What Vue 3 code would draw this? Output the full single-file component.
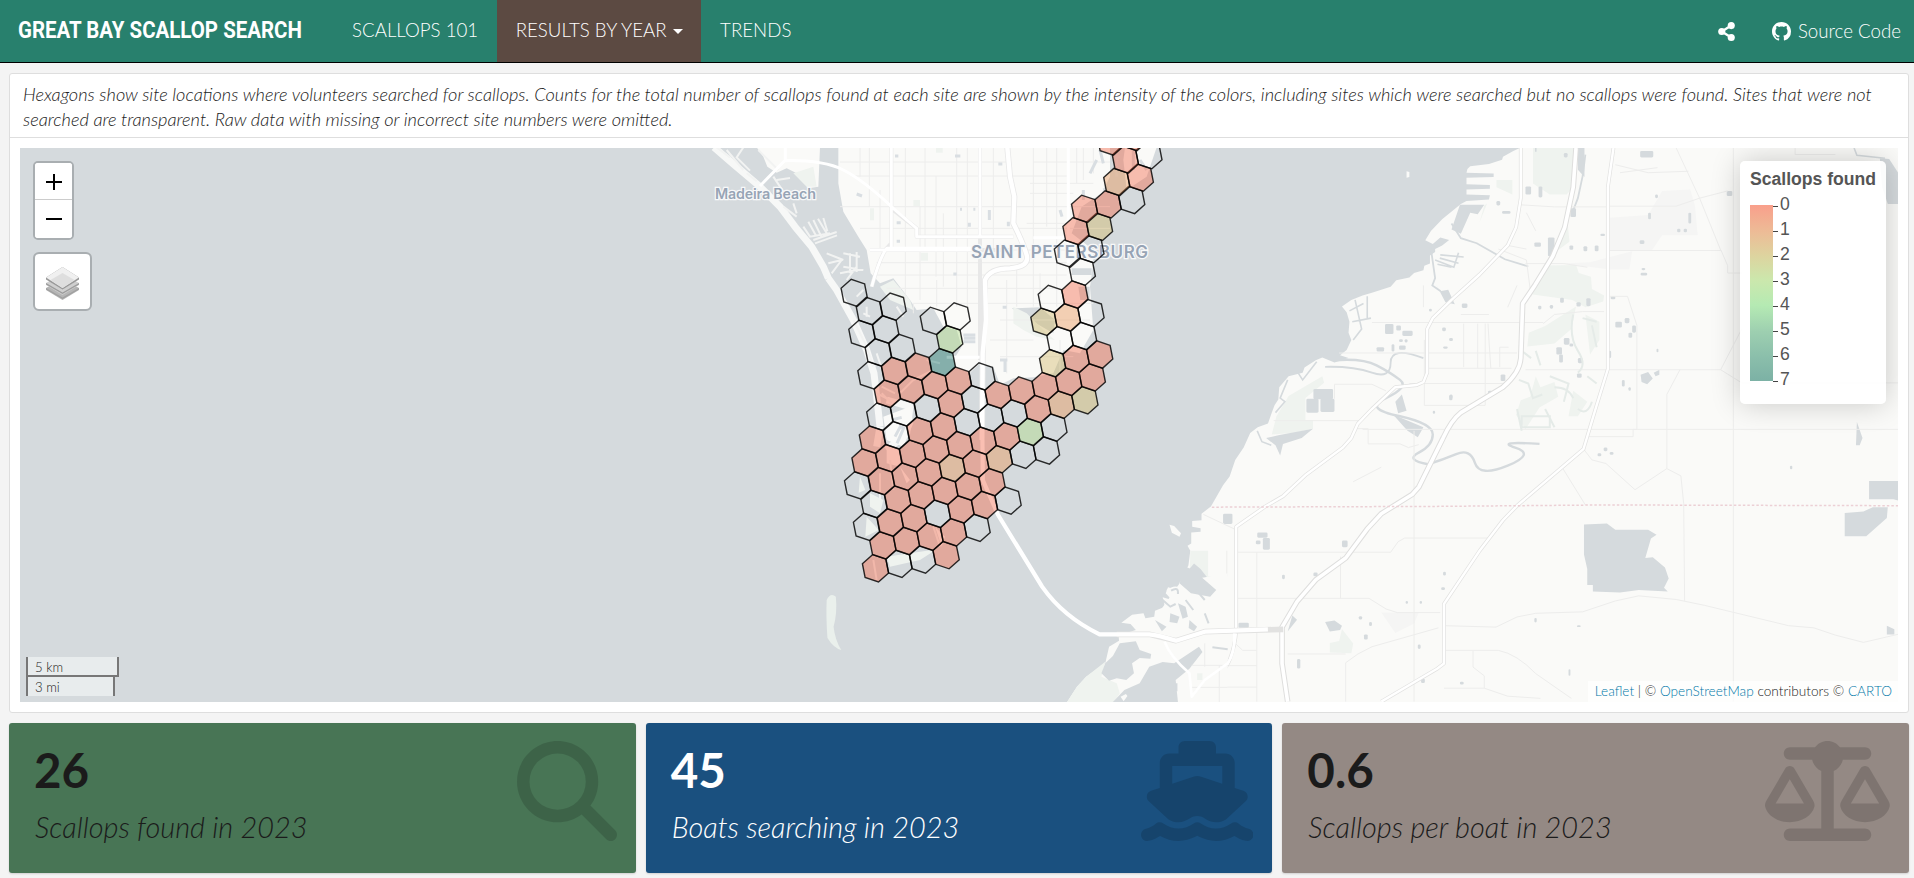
<script setup>
// Site grid: each row holds the starting column and one code per column.
// 0 none found, 1-7 counts, e searched area outline only, . no site
const rows = [
  [0, 0, '0ee0'],
  [1, 0, '0000e'],
  [2, -1, 'e00e00e'],
  [3, -1, 'e00000'],
  [4, -2, 'e00010' + '1ee'],
  [5, -2, '00000003e'],
  [6, -2, '0e00eee012'],
  [7, -2, 'eee0e00000'],
  [8, -2, '0000e..200'],
  [9, -3, 'e007....ee'],
  [10, -3, 'ee.3...21e'],
  [11, -4, 'ee.ee...e0'],
  [12, -4, 'ee.......e'],
  [13, -5, 'e........ee'],
  [14, 4, '02'],
  [15, 4, '00e'],
  [16, 5, '10'],
  [17, 5, '0e'],
  [18, 4, '00'],
]
const fills = { 0: '#f35f3f', 1: '#e88f4b', 2: '#d0b45f', 3: '#aad980', 7: '#0c6e62', e: 'none' }
const corners = [[10.4, -9.1], [-3, -13.6], [-13.1, -4.6], [-10.4, 9.1], [3, 13.6], [13.1, 4.6]]

const hexes = []
for (const [j, start, codes] of rows) {
  ;[...codes].forEach((code, n) => {
    if (code === '.') return
    const i = start + n
    const drift = Math.max(0, j - 12) * 1.2
    const cx = 875.5 + (i < 0 ? 23.8 : 23.55) * i + 7.42 * j + drift
    const cy = 568.3 - 4.37 * i - 22.9 * j + drift * 0.4
    hexes.push({
      id: `${i}:${j}`,
      fill: fills[code],
      points: corners.map(([x, y]) => `${(cx + x).toFixed(1)},${(cy + y).toFixed(1)}`).join(' '),
    })
  })
}

// Ponds and small lakes scattered over the eastern shore
const ponds = [
  [438, 506, 18, 28], [462, 510, 10, 14], [475, 525, 22, 14], [468, 548, 8, 8], [480, 548, 6, 9], [468, 565, 14, 12],
  [420, 570, 16, 12], [452, 562, 6, 20], [270, 712, 26, 38], [300, 712, 30, 36], [285, 685, 42, 28], [92, 1028, 20, 28],
  [165, 1080, 22, 14], [177, 1095, 15, 32], [162, 1102, 10, 10], [346, 1102, 12, 18], [285, 1190, 9, 10], [382, 1310, 7, 9],
  [404, 1326, 6, 11], [125, 1328, 22, 14], [393, 1360, 8, 14], [508, 1388, 6, 12], [250, 1428, 7, 26], [60, 1425, 14, 16],
  [515, 1482, 8, 12], [598, 1490, 8, 8], [757, 1315, 5, 12], [848, 1335, 8, 5], [218, 1196, 6, 12], [482, 1268, 5, 8],
  [512, 1268, 5, 8], [562, 1188, 6, 10], [558, 1230, 8, 8], [1303, 896, 5, 10], [983, 30, 28, 18], [738, 128, 12, 22],
  [766, 128, 8, 30], [676, 168, 8, 12], [688, 195, 18, 8], [757, 282, 14, 12], [786, 268, 14, 52], [834, 188, 12, 24],
  [986, 352, 8, 6], [984, 365, 14, 8], [560, 516, 8, 10], [575, 545, 8, 8], [562, 568, 10, 6], [602, 450, 12, 12],
  [532, 464, 6, 8], [685, 645, 10, 18], [658, 690, 9, 14], [575, 702, 7, 14], [765, 456, 7, 10], [790, 454, 7, 10],
  [812, 434, 8, 14], [847, 446, 9, 12], [868, 435, 9, 22], [920, 430, 10, 8], [982, 276, 10, 10], [1015, 150, 6, 10],
  [1168, 140, 12, 14], [1062, 244, 7, 10], [1076, 244, 7, 10], [862, 292, 8, 14], [886, 290, 8, 16], [832, 290, 8, 12],
  [850, 600, 10, 14], [848, 642, 10, 12], [944, 660, 6, 18], [958, 680, 5, 10], [916, 580, 5, 20], [1018, 574, 4, 10],
  [930, 500, 14, 16], [950, 490, 10, 14], [966, 510, 8, 20], [958, 530, 8, 14], [905, 846, 8, 10], [892, 862, 8, 8],
  [918, 858, 8, 8], [804, 570, 12, 20], [820, 545, 12, 18], [810, 590, 8, 22], [832, 560, 8, 8], [820, 36, 8, 12],
  [1086, 200, 6, 30], [1000, 200, 6, 18], [898, 258, 10, 6], [576, 700, 6, 12], [540, 745, 5, 8], [830, 1456, 4, 18],
]
const labels = [0, 1, 2, 3, 4, 5, 6, 7]
const boxes = [
  {
    value: '26', text: 'Scallops found in 2023', tone: 'green', w: 100, vb: '0 0 512 512',
    d: 'M416 208c0 45.9-14.9 88.3-40 122.7L502.6 457.4c12.5 12.5 12.5 32.8 0 45.3s-32.8 12.5-45.3 0L330.7 376c-34.4 25.2-76.8 40-122.7 40C93.1 416 0 322.9 0 208S93.1 0 208 0S416 93.1 416 208zM208 352a144 144 0 1 0 0-288 144 144 0 1 0 0 288z',
  },
  {
    value: '45', text: 'Boats searching in 2023', tone: 'blue', w: 112.5, vb: '0 0 576 512',
    d: 'M192 32c0-17.7 14.3-32 32-32H352c17.7 0 32 14.3 32 32V64h48c26.5 0 48 21.5 48 48V240l44.4 14.8c23.1 7.7 29.5 37.5 11.5 53.9l-101 92.6c-16.2 9.4-34.7 15.1-50.9 15.1c-19.6 0-40.8-7.7-59.2-20.3c-22.1-15.5-51.6-15.5-73.7 0c-17.1 11.8-38 20.3-59.2 20.3c-16.2 0-34.7-5.7-50.9-15.1l-101-92.6c-18-16.5-11.6-46.2 11.5-53.9L96 240V112c0-26.5 21.5-48 48-48h48V32zM160 218.7l107.8-35.9c13.1-4.4 27.3-4.4 40.5 0L416 218.7V128H160v90.7zM306.5 421.9C329 437.4 356.5 448 384 448c26.9 0 55.4-10.8 77.4-26.1l0 0c11.9-8.5 28.1-7.8 39.2 1.7c14.4 11.9 32.5 21 50.6 25.2c17.2 4 27.9 21.2 23.9 38.4s-21.2 27.9-38.4 23.9c-24.5-5.7-44.9-16.5-58.2-25C449.5 501.7 417 512 384 512c-31.9 0-60.6-9.9-80.4-18.9c-5.8-2.7-11.1-5.3-15.6-7.7c-4.5 2.4-9.7 5.1-15.6 7.7c-19.8 9-48.5 18.9-80.4 18.9c-33 0-65.5-10.3-94.5-25.8c-13.4 8.4-33.7 19.3-58.2 25c-17.2 4-34.4-6.7-38.4-23.9s6.7-34.4 23.9-38.4c18.1-4.2 36.2-13.3 50.6-25.2c11.1-9.4 27.3-10.1 39.2-1.7l0 0C136.7 437.2 165.1 448 192 448c27.5 0 55-10.6 77.5-26.1c11.1-7.9 25.9-7.9 37 0z',
  },
  {
    value: '0.6', text: 'Scallops per boat in 2023', tone: 'taupe', w: 125, vb: '0 0 640 512',
    d: 'M384 32H512c17.7 0 32 14.3 32 32s-14.3 32-32 32H398.4c-5.2 25.8-22.9 47.1-46.4 57.3V448H512c17.7 0 32 14.3 32 32s-14.3 32-32 32H320 128c-17.7 0-32-14.3-32-32s14.3-32 32-32H288V153.3c-23.5-10.3-41.2-31.6-46.4-57.3H128c-17.7 0-32-14.3-32-32s14.3-32 32-32H256c14.6-19.4 37.8-32 64-32s49.4 12.6 64 32zm55.6 288H584.4L512 195.8 439.6 320zM512 416c-62.9 0-115.2-34-126-78.9c-2.6-11 1-22.3 6.7-32.1l95.2-163.2c5-8.6 14.2-13.8 24.1-13.8s19.1 5.3 24.1 13.8l95.2 163.2c5.7 9.8 9.3 21.1 6.7 32.1C627.2 382 574.9 416 512 416zM126.8 195.8L54.4 320H199.3L126.8 195.8zM.9 337.1c-2.6-11 1-22.3 6.7-32.1l95.2-163.2c5-8.6 14.2-13.8 24.1-13.8s19.1 5.3 24.1 13.8l95.2 163.2c5.7 9.8 9.3 21.1 6.7 32.1C242 382 189.7 416 126.8 416S11.7 382 .9 337.1z',
  },
]
</script>

<template>
  <div class="page">
    <nav class="navbar">
      <div class="brand"><span>GREAT BAY SCALLOP SEARCH</span></div>
      <a class="tab">SCALLOPS 101</a>
      <a class="tab active">RESULTS BY YEAR<i class="caret"></i></a>
      <a class="tab">TRENDS</a>
      <div class="right">
        <svg class="share" viewBox="0 0 448 512"><circle cx="352" cy="96" r="96" /><circle cx="96" cy="256" r="96" /><circle cx="352" cy="416" r="96" /><path d="M352 96L96 256l256 160" fill="none" stroke="#fff" stroke-width="64" /></svg>
        <svg class="github" viewBox="0 0 16 16"><path d="M8 0C3.58 0 0 3.58 0 8c0 3.54 2.29 6.53 5.47 7.59.4.07.55-.17.55-.38 0-.19-.01-.82-.01-1.49-2.01.37-2.53-.49-2.69-.94-.09-.23-.48-.94-.82-1.13-.28-.15-.68-.52-.01-.53.63-.01 1.08.58 1.23.82.72 1.21 1.87.87 2.33.66.07-.52.28-.87.51-1.07-1.78-.2-3.64-.89-3.64-3.95 0-.87.31-1.59.82-2.15-.08-.2-.36-1.02.08-2.12 0 0 .67-.21 2.2.82.64-.18 1.32-.27 2-.27s1.36.09 2 .27c1.53-1.04 2.2-.82 2.2-.82.44 1.1.16 1.92.08 2.12.51.56.82 1.27.82 2.15 0 3.07-1.87 3.75-3.65 3.95.29.25.54.73.54 1.48 0 1.07-.01 1.93-.01 2.2 0 .21.15.46.55.38A8.01 8.01 0 0 0 16 8c0-4.42-3.58-8-8-8z" /></svg>
        <span class="source">Source Code</span>
      </div>
    </nav>

    <main class="dash">
      <section class="card">
        <p class="note">Hexagons show site locations where volunteers searched for scallops. Counts for the total number of scallops found at each site are shown by the intensity of the colors, including sites which were searched but no scallops were found. Sites that were not<br />searched are transparent. Raw data with missing or incorrect site numbers were omitted.</p>
        <div class="map">
          <svg class="tiles" viewBox="20 148 1878 554">
            <!-- eastern shore -->
            <g transform="translate(1180 140) scale(.46811 .36352)">
              <path class="land" d="M726 22L712 30 690 46 688 54 660 66 620 72 614 80 612 90 670 92 670 102 612 104 612 122 662 124 662 134 612 136 612 150 662 152 660 164 612 168 600 176 560 218 536 250 524 276 540 286 556 268 575 275 560 290 545 300 545 308 534 318 534 340 522 346 520 358 500 366 490 378 462 386 450 404 430 412 410 420 390 428 366 440 346 458 356 474 362 500 360 530 366 550 356 578 342 592 360 600 330 612 304 598 290 606 266 626 262 640 232 650 212 680 210 714 202 730 196 750 188 780 166 790 150 806 136 846 118 880 106 926 92 950 66 1008 46 1028 46 1046 26 1048 26 1064 44 1068 44 1078 24 1080 24 1110 16 1116 22 1130 18 1170 0 1218 -100 1400 -40 1580H1540V22Z" />
              <path class="park" d="M754 22H850V60L840 130 826 150H790L754 120ZM826 200L832 280 800 310ZM778 345L846 344 852 366 878 376 880 410 906 428 904 444 866 460 838 440 750 424ZM846 458L836 520 800 560 742 568 745 530 780 512ZM304 650L308 668 268 710 268 770H284L284 794 240 806 196 810 206 760 232 704ZM22 1130H60V1200L86 1206 80 1250 20 1240ZM346 1345L370 1385 366 1412 320 1410V1384L340 1378ZM656 175L640 226 650 180ZM676 110H710V150L676 130ZM760 650l10 30 30-14 8 40-40 30-30 60-20-40 10-40 20-10zM840 690l30 30-20 40-20 0zM866 480l30 20v50l-20 40z" />
              <path class="urban" d="M918 214L1000 206 1030 140 1090 136 1100 180 1106 262 1030 262 1008 304 918 304ZM816 340l60-4 90-30-6 50-40 0zM430 1300h80l-10 30-40 26z" />
              <path class="water" d="M863 1058L912 1055 930 1072 1000 1072 1018 1086 1006 1096 994 1150 1010 1148 1036 1176 1044 1206 1034 1232 1042 1242 980 1238 940 1245 882 1242 882 1224 870 1224 870 1180 863 1140ZM1472 938H1540V994L1524 988H1472ZM1420 1026L1460 1022 1480 1010H1512L1510 1040 1466 1090H1420ZM1446 776L1458 820 1452 840H1444ZM984 646L1000 638 1010 656 998 672 986 666ZM1012 640l12-8v14l-8 4zM598 178L650 178 636 204 620 200 600 258 580 246ZM850 22h14v80l-14-20zM1495 50L1515 52 1534 90V176H1512L1500 130ZM310 1326L330 1322 346 1336 342 1348 320 1352ZM240 1308L250 1320 230 1352ZM30 1165L44 1180 84 1246 60 1256 10 1236 0 1210ZM284 794L260 820 220 836 214 868 204 840 184 820 210 812ZM474 700L484 745 466 752 460 720ZM455 755L520 790 508 818 486 800ZM545 392l10 24 18-4 14 40-20-6zM1510 1336l16 10v14h-16zM0 1390L46 1400 30 1430 0 1450Z" />
              <path class="creek" d="M330 606Q390 600 420 620T470 660T440 710T470 760Q540 780 540 810T510 860T530 892Q560 880 590 864T630 888T700 896T716 846T768 836" stroke-width="2.4" />
              <path class="creek" d="M310 624Q370 622 410 640T450 612 520 600M535 290l10 90-6 20 18 16M580 230l20 40 34 14 60 44 50 20M866 40l-6 60-10 60-12 40" stroke-width="1.8" />
              <path class="creek" d="M362 470l30-20M368 500l40 -10M374 440l14 80-18 30M400 430v60M230 660l-16 50 10 10-20 30M252 640l10 20 30-50M165 800l10 30 20 10M1440 22l6 20 60 8M760 22v10M545 330l40 20 10-40M556 316l50 6M555 325l40 14M550 342l30 8" stroke-width="1.6" />
              <rect v-for="(p, n) in ponds" :key="n" class="water" :x="p[0]" :y="p[1]" :width="p[2]" :height="p[3]" rx="3" />
              <path class="minor" d="M724 178L800 184H910M918 182H1060L1110 160 1170 140M1060 22L1110 160 1156 306M918 304H1156L1170 346V366H1200M410 502H776M776 505L800 480 860 472H906M528 628H708M738 632H1155L1200 520M1155 632L1200 668H1540M522 550V730H652V505M340 586H720M606 505V625M636 505V628M658 505L660 550 664 628M683 625V570H702M490 670H690M330 672V712M330 672H410L440 690M200 772H386M376 794H402V836H470L488 846 510 838M390 796H1540M870 816H968V796H976V510L956 430H918M1068 632L1040 700V904M1040 904L972 962 910 890 880 880 862 850M1040 904L1070 924 1076 1000 1078 1268M818 904L866 1004M50 1030L116 1070M120 1134H450L466 1105 480 1095H658M120 1261H404L440 1290 464 1300H556M343 1146V1261M164 1134V1545M100 1130V1200M230 1414H354M354 1545V1438L380 1414 410 1394 552 1342M564 1336L675 1340 720 1312 760 1302 860 1298 930 1268 980 1254 1060 1264 1120 1280 1300 1336 1354 1342 1400 1362 1460 1382 1540 1358M564 1404H680Q720 1414 760 1468L836 1536M626 1405V1450L650 1474V1508H564M650 1508L700 1530 770 1536M1182 22V1545M500 800V1545M0 1446H164M0 1505H164M84 1446V1545M118 1385L134 1404H164M930 68L1000 90 1086 86M940 90L1020 76M1314 22V40H1400M738 340H820L870 350M680 300L740 330 750 430M700 460L720 400M520 400V460M600 480H660M700 290L740 300M430 900L370 940M740 200L760 250" />
              <path class="creek faint" d="M724 660l20 10 10 40 20-10M730 760h60v30h-60zM800 680q30 0 40 30M850 740q20 20 30-20M760 580l10 40M840 480q-10 60 10 100t0 60M870 650l20 20M790 650l40 20-10 50M720 740l10 60M780 740l20 50M730 580l20 20M880 510l10 60M860 490l30 10" stroke-width="2" />
              <path class="case" stroke-width="3.8" d="M728 22V160L718 240 700 290 640 370 580 440 540 490 528 520V640L520 666 506 674 460 680 410 740 380 780 366 820 348 846 270 920 220 980 180 1010 120 1064V1350Q118 1390 106 1430T60 1480L24 1540M926 22L914 130V630L890 730 862 850 720 1006 690 1046 640 1130 564 1276V1440L550 1454 430 1545" />
              <path class="case dark" stroke-width="5.6" d="M846 22L840 130 822 240 796 320 758 400 732 450 728 600Q726 640 690 680L600 750Q580 770 562 820L510 955 496 975 430 1028 400 1070 354 1150 290 1210 250 1270 218 1340V1440L230 1545" />
              <path class="road" stroke-width="2.4" d="M728 22V160L718 240 700 290 640 370 580 440 540 490 528 520V640L520 666 506 674 460 680 410 740 380 780 366 820 348 846 270 920 220 980 180 1010 120 1064V1350Q118 1390 106 1430T60 1480L24 1540M926 22L914 130V630L890 730 862 850 720 1006 690 1046 640 1130 564 1276V1440L550 1454 430 1545" />
              <path class="road" stroke-width="3.6" d="M846 22L840 130 822 240 796 320 758 400 732 450 728 600Q726 640 690 680L600 750Q580 770 562 820L510 955 496 975 430 1028 400 1070 354 1150 290 1210 250 1270 218 1340V1440L230 1545" />
              <path class="county" d="M68 1010L540 1008 900 1004 1540 1006" />
              <path class="land" d="M484 86l6 2v14l-6 2zM708 40l3 2v4l-3 0z" />
            </g>

            <!-- southern inlets -->
            <g transform="translate(780 400) scale(.38265 .33333)">
              <path class="land" d="M1045 545L1040 570 1014 562 1008 580 1024 600 1000 592 1006 620 980 632 978 650 955 655 950 640 920 644 892 668 916 672 930 690 885 706 886 722 860 740 850 790 800 830 776 860 748 910H1170V520Z" />
              <path class="park" d="M850 785L840 830 880 850 888 880 870 910H748L776 860 800 830ZM1090 820h14v20h-14z" />
              <path class="water" d="M888 730L930 724 940 750 970 762 968 776 940 774 920 790 925 820 905 840 880 835 860 842 840 820 850 790 870 768ZM1095 740L1104 756 1070 806 1034 840 1040 906H870L900 870 940 850 965 800 1000 786 1030 790ZM1040 610l20 10 6 30-14 6zM1060 500l20 10 60 60-16 20-50-10-30-30zM1020 640l24 10-6 20-20-4zM980 660l30 20-12 14zM1070 660l20 20-8 14-14-10z" />
              <path class="land" d="M1018 374L1030 378 1048 400 1044 410 1024 398ZM890 890l14-8 4 6-10 16zM1010 570q30-24 40 6l-10 20-20-6z" />
              <path class="creek" stroke-width="2" d="M1022 572q20-14 18 10M1000 600l20 20 14-8M1060 600l20 30M1110 640l10 30M1080 560l30 40M1130 742l40 6M1025 860v20M1036 850v24" />
              <path class="islet" d="M122 600Q132 576 146 590 150 640 140 680 144 720 160 750 140 744 124 714 120 650 122 600Z" />
              <path class="minor" d="M1076 796H1170M1076 862H1170M1148 796V910M1110 730V800" />
              <path class="case" stroke-width="5.6" d="M880 703H965L1035 722 1110 695 1315 688" />
              <path class="road" stroke-width="4.2" d="M528 0L530 240 570 345 685 560Q740 650 835 703H965Q990 706 1035 722L1110 695 1275 688" />
              <path class="road" stroke-width="2.6" d="M1005 725Q1020 770 1070 820L1076 890 1110 840 1170 790Q1190 760 1187 700" />
            </g>

            <!-- peninsula and barrier islands -->
            <g transform="translate(680 140) scale(.33333)">
              <path class="land" d="M230 22H420L415 140 385 145 350 100 320 85 290 98 262 80 250 50ZM475 22L475 130 490 215 535 290 560 330 572 400 600 430 640 415 690 480 710 510 760 505 790 560 830 570 845 620 820 660 828 685 870 698 900 670 940 680 960 735 1000 715 1060 712 1120 700 1150 630 1200 640 1240 570 1230 440 1240 370 1240 330 1175 280 1205 200 1265 160 1290 110 1290 22ZM1335 22H1430L1400 110 1340 150 1330 60Z" />
              <path class="water" d="M995 505L1080 502 1125 540 1120 580 1060 545ZM1195 440h34v40h-28zM1175 385h60v20h-60z" />
              <path class="park" d="M1000 500L1040 520 1100 580 1125 600 1070 590 1030 570 1000 550ZM600 440l40-20 50 60 10 30-70-30zM340 100l60-20 10 60-30 0zM700 180h20v18h-20zM722 338h22v24h-22zM570 205l12 0v36h-12zM768 22h20v16h-20z" />
              <path class="beach" d="M102 22L160 72 240 140 300 200 345 260 395 320 430 380 445 415M445 415L470 450 520 540 560 630 582 700 590 770 600 860" />
              <path class="beach" d="M600 860L590 920M620 780L690 800 680 880 620 930" />
              <path class="canal" d="M110 22l40 30M140 30l50 60M190 22l-20 30 40 40M200 100l30 24M235 30l60 60M280 110l40 60M310 200l40 30M290 120l40-6M340 190l10 30M370 260l20 30 60-10M385 245l24 44M400 240l24 50M414 236l26 44M430 234l12 40M400 300l70-24M405 310l66-24M440 340l50 20M445 370l40-10M455 400l30-40M490 340l50 10M510 340v60M530 336v60M480 400l50-10M500 420l30-40M490 380l60 10" />
              <path class="canal" d="M530 470l20-20M560 500v30M570 530l-20-10M520 540l40 80 20 60M700 720l-40 40M760 690l-60 30M740 660l40 10M620 460l30 20M650 500l20 30M605 760l30 30M590 640l20 60" />
              <path class="minor" d="M480 66H980M520 108H1160M480 200H1290M540 265H1290M570 330H1160M590 368H1160M590 405H1160M620 445H1160M700 490H1240M770 420V500M540 22V110M568 22V200M600 150V330M676 22V500M720 200V480M735 22V330M768 108V410M790 220V440M830 22V500M862 22V500M940 22V330M1060 22V500M1100 22V260M1130 22V500M1190 22V130M1210 22V120M1240 22V100M1060 66H1290M1050 160H1180M1050 130H1240M1040 250H1170M960 540H1230M930 600H1060M960 650H1180M980 420V700M1080 400V500M1140 600V700M1010 380V500M700 520V490" />
              <path class="case thin" stroke-width="4" d="M634 22V330M900 22V660M575 440Q600 350 620 325L634 310M634 205L710 265V290H1000M570 330H1000" />
              <path class="road" stroke-width="3" d="M634 22V330M900 22V290M316 22V60L240 138M316 62Q430 60 490 90T640 205L710 265V290H1000M575 440Q600 350 620 325H900M800 652H900M1165 22V370M1060 293H1170M570 330H900" />
              <path class="case thin" stroke-width="6" d="M982 22L990 110 1003 170 1000 250Q1030 310 1040 345T990 385Q930 385 915 420L908 640 906 900" />
              <path class="road" stroke-width="4.4" d="M982 22L990 110 1003 170 1000 250Q1030 310 1040 345T990 385Q930 385 915 420L918 540 908 640 906 900" />
              <path class="ponds" d="M530 162l16 6M645 48h10M825 48h16M955 72h12M650 248h12M650 304h10M868 248v12M928 210v30M985 245v14M840 208h6M880 208h6M968 502h12M820 402h10M960 660h22M975 656v40M1140 210l6 20M850 585h36M852 595h34M850 605h36M1250 60l-20 40M1260 30l10 40M1270 150l20-10M1210 150v30M1310 30v80M1300 50h20M1300 90h20M1360 30v60M1380 60l20 30" />
            </g>
            <g transform="translate(820 260) scale(.33333)">
              <path class="park" d="M120 650l16 40-20 8zM150 700l40 20-10 40-30-20zM140 770l36 40-40 20zM200 890L350 868 300 900 210 920Z" />
              <path class="land" d="M190 470L270 440 280 490 250 560 200 540ZM200 560L240 570 240 620 200 610ZM240 620l30 40-10 10zM345 800l30 30-10 30z" />
              <path class="canal" d="M170 400l40 20M185 380l40 20M210 600l10 90M180 640l0 80M160 900l10 60M340 800l20 60" />
              <path class="ponds" d="M225 530l16-30 10 4-20 46M215 480l30-8" />
            </g>

            <g class="place">
              <text x="715" y="199" font-size="14.400" textLength="101">Madeira Beach</text>
              <text x="971" y="257.500" font-size="17" textLength="177">SAINT PETERSBURG</text>
            </g>
            <polygon v-for="h in hexes" :key="h.id" class="hex" :points="h.points" :fill="h.fill" />
          </svg>

          <div class="controls">
            <div class="zoom">
              <button><svg viewBox="0 0 16 16"><path d="M8 0v16M0 8h16" /></svg></button>
              <button><svg viewBox="0 0 16 16"><path d="M0 8h16" /></svg></button>
            </div>
            <div class="layers">
              <svg viewBox="0 0 33 33">
                <path d="M0 21l16.500-9 16.500 9v2L16.500 33 0 23z" fill="#b5b5b5" />
                <path d="M0 21l16.500 9.500L33 21v1.500L16.500 32 0 22.500z" fill="#a0a0a0" />
                <path d="M0 16l16.500-9 16.500 9v2L16.500 28 0 18z" fill="#cfcfcf" />
                <path d="M0 16l16.500 9.500L33 16v1.500L16.500 27 0 17.500z" fill="#9c9c9c" />
                <path d="M0 10.500L16.500 0 33 10.500v2L16.500 22.500 0 12.500z" fill="#999" />
                <path d="M0 10.500L16.500 0 33 10.500 16.500 21z" fill="#f0f0f0" />
                <path d="M4.500 13L16.500 6l12 7-12 8z" fill="#dedede" />
              </svg>
            </div>
          </div>

          <div class="legend">
            <b>Scallops found</b>
            <div class="ramp">
              <div class="bar"></div>
              <ul><li v-for="l in labels" :key="l">{{ l }}</li></ul>
            </div>
          </div>

          <div class="scale"><span class="km">5 km</span><span class="mi">3 mi</span></div>
          <div class="credit"><a>Leaflet</a> | © <a>OpenStreetMap</a> contributors © <a>CARTO</a></div>
        </div>
      </section>

      <section class="boxes">
        <article v-for="b in boxes" :key="b.value" class="box" :class="b.tone">
          <div>
            <h2>{{ b.value }}</h2>
            <p>{{ b.text }}</p>
          </div>
          <svg :viewBox="b.vb" :width="b.w" height="100"><path :d="b.d" /></svg>
        </article>
      </section>
    </main>
  </div>
</template>

<style>
body { margin: 0; background: #f4f4f4; overflow: hidden; }
</style>

<style scoped>
.page { width: 1914px; height: 878px; font-family: Lato, "Liberation Sans", sans-serif; font-weight: 300; background: #f4f4f4; }
.navbar { display: flex; height: 62px; background: #28806d; border-bottom: 1px solid #000; color: #fff; font-size: 18.7px; line-height: 60px; }
.brand { box-sizing: border-box; width: 333px; padding-left: 17.5px; font: 700 24.5px/60px Roboto, sans-serif; white-space: nowrap; }
.brand span { display: inline-block; transform-origin: left; transform: scaleX(.835); }
.tab { padding: 0 18.5px 0 19px; white-space: nowrap; }
.caret { display: inline-block; margin-left: 6px; vertical-align: 3px; border: 5px solid transparent; border-top-color: #fff; border-bottom: 0; }
.active { background: #5c4a42; }
.right { display: flex; align-items: center; margin-left: auto; padding-right: 13px; fill: #fff; }
.share { width: 17px; height: 19px; margin-right: 37px; }
.github { width: 19px; height: 19px; margin-right: 7px; }
.dash { padding: 10px 5px 0 9px; }
.card { box-sizing: border-box; height: 640px; border: 1px solid #dedede; border-radius: 3px; background: #fff; }
.note { box-sizing: border-box; height: 64px; margin: 0; padding: 8px 0 0 13px; border-bottom: 1px solid #dedede; font-size: 18.22px; line-height: 25px; font-style: italic; color: #222; white-space: nowrap; }
.map { position: relative; height: 554px; margin: 10px; background: #d5dadd; overflow: hidden; }
.tiles { display: block; width: 1878px; height: 554px; }
.tiles path { vector-effect: non-scaling-stroke; }
.land { fill: #fafaf8; }
.park { fill: #eff3ef; }
.urban { fill: #f5f5f4; }
.water { fill: #d5dadd; }
.islet { fill: #eaf0ec; }
.creek { fill: none; stroke: #d5dadd; }
.faint { stroke: #e5ebe8; }
.canal { fill: none; stroke: #f2f3f2; stroke-width: 2; }
.beach { fill: none; stroke: #f7f8f7; stroke-width: 7; stroke-linejoin: round; }
.minor { fill: none; stroke: #ededec; stroke-width: 1; }
.case { fill: none; stroke: #e2e2e1; stroke-linejoin: round; }
.dark { stroke: #dededd; }
.thin { stroke: #e8e8e8; }
.road { fill: none; stroke: #fff; stroke-linejoin: round; }
.county { fill: none; stroke: #ecd0d5; stroke-width: 1.5; stroke-dasharray: 2.500 2; }
.ponds { fill: none; stroke: #d9dee2; stroke-width: 3; }
.place { font-family: Inter, "Open Sans", sans-serif; font-weight: 600; fill: #97a4b5; stroke: #f7f8f9; stroke-width: 2.5px; paint-order: stroke; }
.hex { fill-opacity: .4; stroke: #000; stroke-opacity: .82; stroke-width: 1.4; }
.controls { position: absolute; left: 13px; top: 13px; }
.zoom { width: 37px; border: 2px solid #a9aeb1; border-radius: 5px; background: #fff; overflow: hidden; }
.zoom button { display: flex; align-items: center; justify-content: center; width: 37px; height: 37px; padding: 0; border: 0; background: #fff; }
.zoom button:first-child { border-bottom: 1px solid #ccc; }
.zoom button + button { height: 38px; }
.zoom svg { width: 16px; height: 16px; margin-left: 1px; margin-top: 1px; stroke: #000; stroke-width: 2; }
.zoom button + button svg { margin-top: -1px; }
.layers { display: flex; align-items: center; justify-content: center; width: 55px; height: 55px; margin-top: 12px; border: 2px solid #a9aeb1; border-radius: 6px; background: #fff; }
.layers svg { width: 33px; height: 33px; margin-top: 3px; }
.legend { position: absolute; right: 12px; top: 13px; box-sizing: border-box; width: 146px; height: 243px; padding: 8px 10px; border-radius: 5px; background: rgba(255, 255, 255, .9); box-shadow: 0 0 30px rgba(0, 0, 0, .2); color: #555; font: 17.6px/20px "Liberation Sans", Arial, sans-serif; }
.legend b { display: block; white-space: nowrap; }
.ramp { display: flex; margin-top: 16px; }
.bar { width: 23px; height: 176px; background: linear-gradient(#f99f8b, #ecbd97 16%, #ddd49f 29%, #cbe8ad 43%, #b5eab3 57%, #9dcfb0 72%, #8bbfab 86%, #7cb1a5); }
.ramp ul { margin: -11px 0 0; padding: 0; list-style: none; }
.ramp li { display: flex; align-items: center; height: 20px; margin-bottom: 5px; }
.ramp li::before { content: ""; width: 5px; height: 1px; margin: 4px 2px 0 0; background: #444; }
.scale { position: absolute; left: 6px; bottom: 6px; display: flex; flex-direction: column; align-items: flex-start; font-size: 13.200px; color: #222; }
.scale span { box-sizing: border-box; height: 20px; padding-left: 7px; line-height: 20px; border: 2px solid #777; border-top: 0; background: #e8eced; }
.scale .km { width: 93px; }
.scale .mi { width: 89px; height: 19px; border-bottom: 0; }
.credit { position: absolute; right: 0; bottom: 0; height: 21px; padding: 0 6px 0 7px; background: rgba(255, 255, 255, .7); color: #222; font-size: 13.64px; line-height: 20px; white-space: nowrap; }
.credit a { color: #0078a8; }
.boxes { display: grid; grid-template-columns: repeat(3, 1fr); gap: 10px; margin-top: 10px; }
.box { display: flex; justify-content: space-between; box-sizing: border-box; height: 150px; padding: 18px 19px 0 26px; border-radius: 3px; box-shadow: 0 1px 2px rgba(0, 0, 0, .15); color: #1b1b1b; }
.box h2 { margin: 0 0 0 -1px; font-size: 47.5px; line-height: 58px; font-weight: 700; }
.box p { margin: 11px 0 0; font-size: 28.9px; line-height: 34px; font-style: italic; white-space: nowrap; }
.box svg { fill: rgba(0, 0, 0, .15); }
.green { background: #487555; }
.blue { background: #1a507f; color: #fff; }
.taupe { background: #948984; }
</style>
